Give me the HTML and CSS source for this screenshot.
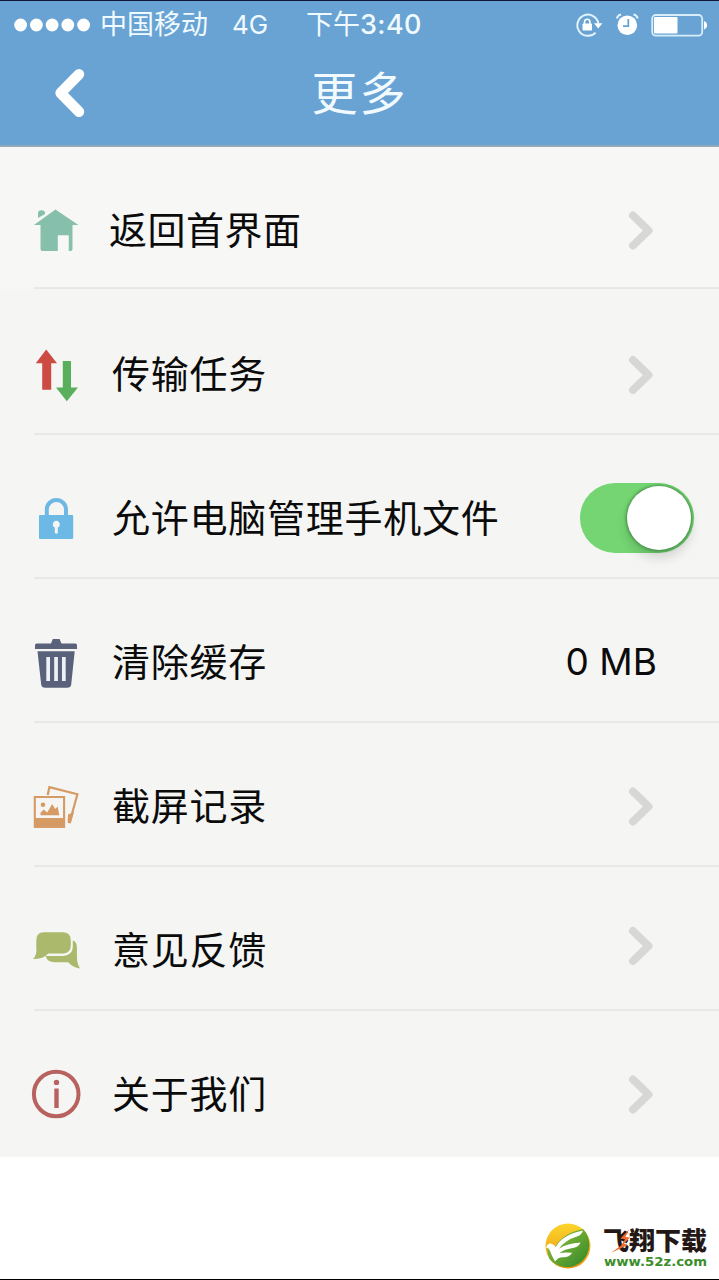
FILE: index.html
```html
<!DOCTYPE html>
<html lang="zh-CN">
<head>
<meta charset="utf-8">
<title>更多</title>
<link rel="stylesheet" href="styles.css">
</head>
<body>
<div class="screen">
  <header class="header">
    <div class="status">
      <svg class="signal" viewBox="0 0 80 16"><g fill="#fff"><circle cx="6.6" cy="8" r="6.4"/><circle cx="22.4" cy="8" r="6.4"/><circle cx="38.1" cy="8" r="6.4"/><circle cx="53.8" cy="8" r="6.4"/><circle cx="69.6" cy="8" r="6.4"/></g></svg>
      <span class="carrier">中国移动</span>
      <span class="network">4G</span>
      <span class="time">下午<b class="clock">3:40</b></span>
      <svg class="status-icons" viewBox="572 8 140 32">
        <path d="M595.6 31.6A10.6 10.6 0 1 1 598.4 22.5" fill="none" stroke="#e4f3fd" stroke-width="2"/>
        <path d="M594 22.3h8.4l-4.2 5.2z" fill="#fff"/>
        <rect x="582.5" y="22.5" width="9.5" height="7" rx=".8" fill="#fff"/>
        <path d="M584.5 23v-2a2.7 2.7 0 0 1 5.4 0v2" fill="none" stroke="#fff" stroke-width="1.6"/>
        <circle cx="627.3" cy="24.3" r="9.8" fill="#fff"/>
        <path d="M628.3 18v7.2h-5.3" fill="none" stroke="#68a3d4" stroke-width="1.8"/>
        <path d="M616.8 17.5q1-3.3 4.3-4M637.8 17.5q-1-3.3-4.3-4" fill="none" stroke="#e4f3fd" stroke-width="2"/>
        <rect x="652.2" y="14" width="50" height="20.6" rx="3.5" fill="none" stroke="#d8edfa" stroke-width="1.8"/>
        <rect x="654" y="16" width="23.5" height="16.6" rx="1" fill="#fff"/>
        <path d="M704 20q3 1 3 4.2t-3 4.2z" fill="#fff"/>
      </svg>
    </div>
    <nav class="nav">
      <svg class="back" viewBox="50 65 40 56"><path d="M79 74.3L60.6 93l18.4 18.7" fill="none" stroke="#fff" stroke-width="10.5" stroke-linecap="round" stroke-linejoin="round"/></svg>
      <h1 class="title">更多</h1>
    </nav>
  </header>

  <main class="list">
    <div class="row row-home">
      <svg class="icon" viewBox="26 200 60 60"><g fill="#87bfad"><path d="M38 218v-4.5q0-3.3 3.5-3.3t3.5 2.5v1.3z"/><path d="M55.5 209.4L78.4 225h-5.9v24q0 2-2 2h-1.7v-15.7h-11V251H42.5q-2 0-2-2v-24h-6.6z"/></g></svg>
      <span class="label">返回首界面</span>
      <svg class="chevron" viewBox="622 206 36 50"><path d="M633 216.5l15.5 15-15.5 15"/></svg>
    </div>
    <div class="row row-transfer">
      <svg class="icon" viewBox="26 344 60 60"><path d="M46.2 349.5L57 363.2h-5.8v26.6h-9v-26.6h-6.4z" fill="#cc4c44"/><path d="M66.8 401.2L56 387.4h6.8V361h8.2v26.4h7z" fill="#5aaf5d"/></svg>
      <span class="label">传输任务</span>
      <svg class="chevron" viewBox="622 349 36 50"><path d="M633 360l15.5 15-15.5 15"/></svg>
    </div>
    <div class="row">
      <svg class="icon" viewBox="26 488 60 60"><path d="M46.8 516v-6.5a9.6 9.6 0 0 1 19.2 0v6.5" fill="none" stroke="#6fb8e3" stroke-width="4"/><rect x="39" y="515" width="34.2" height="24" rx="1" fill="#6cb9e6"/><path d="M54.8 527.5a3.5 3.5 0 1 1 3 0v5.3q-1.5 2-3 0z" fill="#f5f5f3"/></svg>
      <span class="label">允许电脑管理手机文件</span>
      <span class="switch"><i class="knob"></i></span>
    </div>
    <div class="row">
      <svg class="icon" viewBox="26 632 60 60"><path d="M51 643.5l1.8-4.5h6.8l1.8 4.5h13.8q1.8 0 1.8 1.8v3.8H35v-3.8q0-1.8 1.8-1.8z" fill="#59617b"/><path d="M37.5 651.2h37.2l-3.5 33.3q-.5 3.2-4 3.2h-22q-3.5 0-4-3.2z" fill="#59617b"/><path d="M46.3 657h3.7v24h-3.7zM54.2 657h3.7v24h-3.7zM62 657h3.7v24H62z" fill="#edf1f8"/></svg>
      <span class="label">清除缓存</span>
      <span class="value">0 MB</span>
    </div>
    <div class="row">
      <svg class="icon" viewBox="26 776 60 60"><path d="M47.7 795l1.7-7.8 28 7-7.6 27.5" fill="none" stroke="#d69a65" stroke-width="2.2"/><path d="M68 814.5l6-2.5-3.2 11.6-3.2-.8z" fill="#d69a65"/><path d="M34.8 797h29.3v29.7H34.8z" fill="#f5f5f3" stroke="#d69a65" stroke-width="2.1"/><path d="M34 818h31v9.8H34z" fill="#d69a65"/><circle cx="43" cy="804.7" r="2.3" fill="#d69a65"/><path d="M40.5 815.3v-2.6l3.2-3.2 3.5 3 5-8.5 3 5 2.4-2.5 1.7 8.8z" fill="#d69a65"/></svg>
      <span class="label">截屏记录</span>
      <svg class="chevron" viewBox="622 781 36 50"><path d="M633 791.5l15.5 15-15.5 15"/></svg>
    </div>
    <div class="row">
      <svg class="icon" viewBox="26 920 60 60"><g fill="#aab96b"><path d="M44 932.2h18.5q8.3 0 8.3 8.3v4.7q0 8.2-8.3 8.2H48.4q-5 5.5-15.5 5.7 4.4-3.7 3.4-11.5v-7q0-8.4 7.7-8.4z"/><path d="M72.8 940.5q4 1 4.1 6.5v9.5q0 7.3 3.2 12-7-1-12-6.2H54.4q-7 0-8.8-6.2h18.2q8.5-1 9-8.5z"/></g></svg>
      <span class="label">意见反馈</span>
      <svg class="chevron" viewBox="622 925 36 50"><path d="M633 931l15.5 15-15.5 15"/></svg>
    </div>
    <div class="row row-about">
      <svg class="icon" viewBox="26 1064 60 60"><circle cx="56.2" cy="1094" r="22.3" fill="none" stroke="#b86260" stroke-width="4"/><circle cx="56.5" cy="1082.4" r="2.7" fill="#b86260"/><path d="M54.3 1088.5h4.4v19.5h-4.4z" fill="#b86260"/></svg>
      <span class="label">关于我们</span>
      <svg class="chevron" viewBox="622 1069 36 50"><path d="M633 1079.5l15.5 15-15.5 15"/></svg>
    </div>
  </main>

  <svg class="watermark" viewBox="540 1216 179 60">
    <defs>
      <linearGradient id="sun" x1="0" y1="0" x2="0" y2="1"><stop offset="0" stop-color="#fbd52c"/><stop offset="1" stop-color="#ef9410"/></linearGradient>
      <linearGradient id="leaf" x1="0" y1="0" x2="1" y2="1"><stop offset="0" stop-color="#9ac83b"/><stop offset="1" stop-color="#2f8429"/></linearGradient>
    </defs>
    <circle cx="568" cy="1246" r="22.5" fill="url(#sun)"/>
    <path d="M583 1229a22.5 22.5 0 1 1-33.5 30q-2.500-6-2-12l8-1q8-13 27.500-17z" fill="url(#leaf)"/>
    <path d="M546 1247.500q2-4.800 5.500-3.800 3.500 1.200 4.300 3.200 6.500-12.500 27.200-16.500-1.300 4.300-5.500 5.800-13 4.200-18.500 12.500 8-5.500 21.500-6.300-1.800 4.300-6.500 5.300-10 1.500-14.300 5.300 5-1 12.500-.2-3 4.500-8.500 4.500-5.500-.5-8.700 4.200-3-5-5-10.500-1.300-3.300-4-3.500z" fill="#fff"/>
    <text class="brand" x="603" y="1250" textLength="104" lengthAdjust="spacingAndGlyphs">飞翔下载</text>
    <path d="M629 1229.500l-8.500 9 4.500.8-4 6.500-10 7 16.500-7.500-3.500-1.500 6-6.300-4.500-.5z" fill="#ed6930"/>
    <text class="site" x="604" y="1265.500" textLength="103" lengthAdjust="spacingAndGlyphs">www.52z.com</text>
  </svg>
</div>
</body>
</html>
```
FILE: styles.css
```css
* { box-sizing: border-box; }

body {
  margin: 0;
  background: #fff;
  color: #0b0b0b;
  font-family: Inter, "Noto Sans CJK SC", sans-serif;
}

.screen {
  position: relative;
  height: 1280px;
  overflow: hidden;
  border-top: 1px solid #10153a;
  border-bottom: 1px solid #000;
}

.header {
  height: 146px;
  background: #68a3d4;
  border-bottom: 2px solid #93a8b9;
  color: #f1faff;
}

.status {
  display: flex;
  align-items: center;
  height: 47px;
  padding-left: 14px;
  font-size: 27px;
  line-height: 40px;
  white-space: nowrap;
}

.signal { width: 80px; height: 16px; }
.carrier { width: 109px; margin-left: 6px; }
.network { width: 38px; margin-left: 23px; font-size: 26px; }
.time { width: 118px; margin-left: 36px; }
.clock { font-weight: 500; letter-spacing: .4px; }
.status-icons { width: 140px; height: 32px; margin-left: 148px; }

.nav {
  display: grid;
  grid-template-columns: 90px 1fr 90px;
  align-items: center;
  height: 90px;
}

.back { width: 40px; height: 56px; margin-left: 50px; }

.title {
  margin: 0;
  font-size: 46px;
  font-weight: 400;
  letter-spacing: 2px;
  line-height: 60px;
  text-align: center;
}

.list { background: #f5f5f3; }

.row {
  display: flex;
  align-items: center;
  height: 144px;
  padding: 22px 0 0 26px;
  background: linear-gradient(#e8e8e7, #e8e8e7) 34px 100% / 100% 2px no-repeat;
}

.row-home { height: 142px; padding-top: 24px; background-color: #f7f7f6; }
.row-transfer { height: 146px; padding-top: 24px; }
.row-about { height: 146px; padding-top: 20px; background: none; }

.icon { flex: none; width: 60px; height: 60px; }

.label {
  flex: 1;
  margin-left: 26px;
  font-size: 38px;
  letter-spacing: .75px;
  line-height: 56px;
  white-space: nowrap;
}

.row-home .label { margin-left: 23px; letter-spacing: .5px; }

.chevron { flex: none; width: 36px; height: 50px; margin-right: 61px; }
.chevron path {
  fill: none;
  stroke: #d7d7d6;
  stroke-width: 8;
  stroke-linecap: round;
  stroke-linejoin: round;
}

.switch {
  display: flex;
  justify-content: flex-end;
  width: 114px;
  height: 70px;
  margin-right: 25px;
  padding: 3px;
  border-radius: 35px;
  background: #74d572;
}

.knob {
  width: 64px;
  height: 64px;
  border-radius: 50%;
  background: #fff;
  box-shadow: 0 0 3px 1px rgba(30, 90, 40, .55), 0 8px 12px rgba(0, 0, 0, .14);
}

.value { margin-right: 62px; font-size: 37px; line-height: 56px; }

.watermark {
  position: absolute;
  left: 540px;
  top: 1215px;
  width: 179px;
  height: 60px;
}

.brand { font: 900 25px "Noto Sans CJK SC", sans-serif; fill: #231815; }
.site { font: bold 13px "DejaVu Sans", sans-serif; fill: #3c8d2b; }
```
